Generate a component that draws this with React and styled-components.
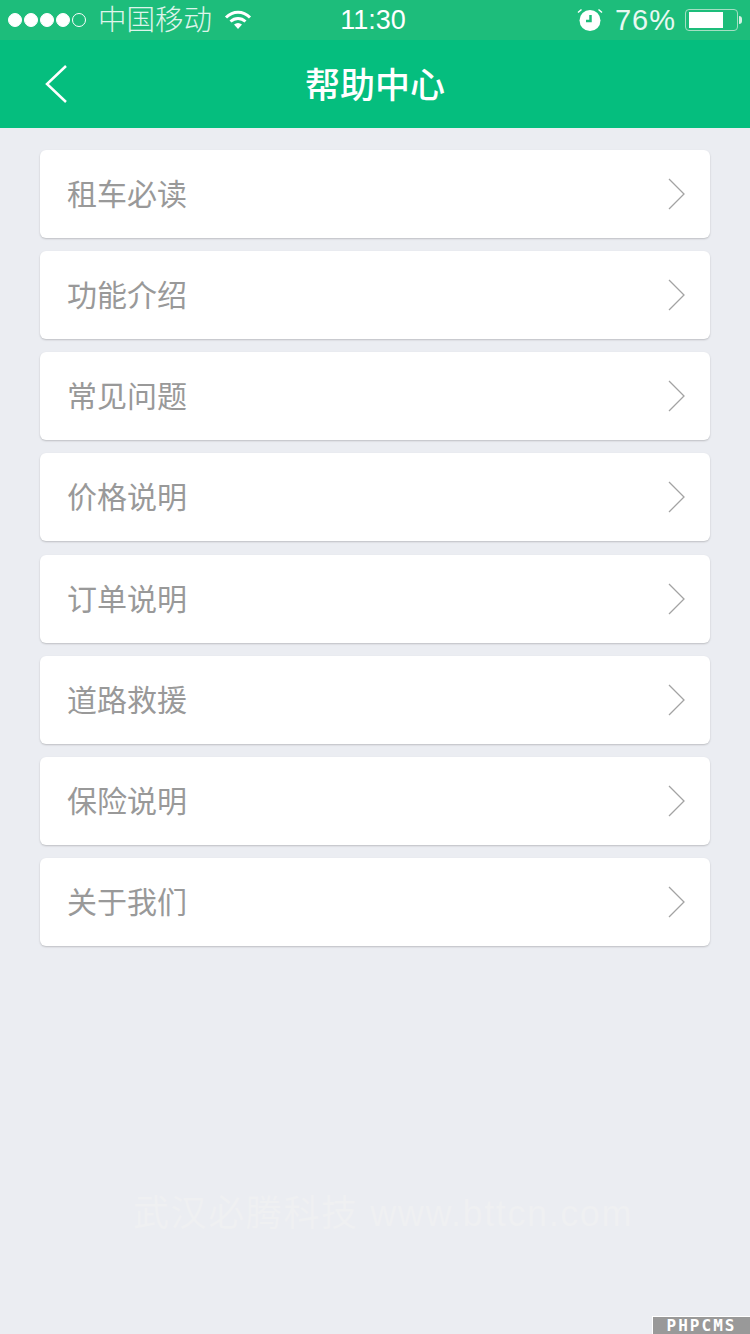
import React from 'react'
import styled, { createGlobalStyle } from 'styled-components'

const items = ['租车必读', '功能介绍', '常见问题', '价格说明', '订单说明', '道路救援', '保险说明', '关于我们']

function App() {
    return (
        <Page>
            <GlobalStyle />
            <StatusBar>
                <StatusLeft>
                    <Signal>
                        {[1, 2, 3, 4].map(i => <Dot key={i} />)}
                        <Dot $empty />
                    </Signal>
                    <Carrier>中国移动</Carrier>
                    <svg width="28" height="22" viewBox="0 0 28 22">
                        <path d="M2 8.500C9 1.500 19 1.500 26 8.500" fill="none" stroke="#fff" strokeWidth="3" />
                        <path d="M6.500 12.500C11 8.500 17 8.500 21.500 12.500" fill="none" stroke="#fff" strokeWidth="3" />
                        <path d="M10 15.500C12.500 13.500 15.500 13.500 18 15.500L14 20Z" fill="#fff" />
                    </svg>
                </StatusLeft>
                <Time>11:30</Time>
                <StatusRight>
                    <svg width="26" height="24" viewBox="0 0 26 24">
                        <circle cx="13" cy="12.500" r="10.500" fill="#fff" />
                        <path d="M13.500 7V13H9" fill="none" stroke="#1dbd7b" strokeWidth="2.500" />
                        <path d="M1 4.500L4.500 1.500M25 4.500L21.500 1.500" fill="none" stroke="#fff" strokeWidth="1.500" />
                    </svg>
                    <Percent>76%</Percent>
                    <Battery>
                        <BatteryFill />
                    </Battery>
                    <BatteryTip />
                </StatusRight>
            </StatusBar>
            <NavBar>
                <BackIcon width="26" height="40" viewBox="0 0 26 40">
                    <path d="M22 2L3 20L22 38" fill="none" stroke="#fff" strokeWidth="2.500" />
                </BackIcon>
                <Title>帮助中心</Title>
            </NavBar>
            <List>
                {items.map(item => (
                    <Row key={item}>
                        <RowLabel>{item}</RowLabel>
                        <svg width="17" height="32" viewBox="0 0 17 32">
                            <path d="M1 1L16 16L1 31" fill="none" stroke="#a3a3a3" strokeWidth="1.300" />
                        </svg>
                    </Row>
                ))}
            </List>
            <Watermark>武汉必腾科技 www.bttcn.com</Watermark>
            <Badge>PHPCMS</Badge>
        </Page>
    )
}

export default App

const GlobalStyle = createGlobalStyle`
    body {
        margin: 0;
        background: #ebedf2;
        font-family: "Liberation Sans", "Noto Sans CJK SC", sans-serif;
    }
`
const Page = styled.div`
    position: relative;
    width: 750px;
    height: 1334px;
    overflow: hidden;
    background-color: #ebedf2;
`
const StatusBar = styled.div`
    height: 40px;
    padding: 0 8px;
    display: grid;
    grid-template-columns: 1fr auto 1fr;
    align-items: center;
    background-color: #1dbd7b;
    color: #fff;
`
const StatusLeft = styled.div`
    display: flex;
    align-items: center;
`
const Signal = styled.div`
    display: flex;
    gap: 2px;
    margin-right: 12px;
`
const Dot = styled.span`
    width: 14px;
    height: 14px;
    box-sizing: border-box;
    border-radius: 50%;
    background-color: ${props => props.$empty ? 'transparent' : '#fff'};
    border: 1px solid #fff;
`
const Carrier = styled.span`
    font-size: 28.500px;
    font-weight: 300;
    line-height: 40px;
    margin-right: 12px;
    opacity: 0.85;
`
const Time = styled.span`
    margin-right: 4px;
    font-size: 27px;
    line-height: 40px;
`
const StatusRight = styled.div`
    display: flex;
    align-items: center;
    justify-content: flex-end;
`
const Percent = styled.span`
    font-size: 29px;
    line-height: 40px;
    letter-spacing: 1px;
    margin: 0 9px 0 12px;
    opacity: 0.9;
`
const Battery = styled.div`
    width: 53px;
    height: 22px;
    box-sizing: border-box;
    padding: 2px 3px;
    border: 1px solid #a5dfc3;
    border-radius: 4px;
`
const BatteryFill = styled.div`
    width: 76%;
    height: 100%;
    background-color: #fff;
`
const BatteryTip = styled.div`
    width: 3px;
    height: 8px;
    margin-left: 1px;
    border-radius: 0 3px 3px 0;
    background-color: #d5f2e4;
`
const NavBar = styled.div`
    position: relative;
    height: 88px;
    display: flex;
    align-items: center;
    justify-content: center;
    background-color: #05be7e;
`
const BackIcon = styled.svg`
    position: absolute;
    left: 44px;
    top: 24px;
`
const Title = styled.h1`
    margin: 0 0 2px;
    color: #fff;
    font-size: 35px;
    font-weight: 500;
    line-height: 86px;
    font-family: "Noto Sans CJK SC", sans-serif;
`
const List = styled.div`
    margin: 22px 40px 0;
    display: flex;
    flex-direction: column;
    gap: 13.150px;
`
const Row = styled.div`
    height: 88px;
    padding: 0 25px 0 27px;
    display: flex;
    align-items: center;
    justify-content: space-between;
    background-color: #fff;
    border-radius: 6px;
    box-shadow: 0 1px 2px rgba(0, 0, 0, 0.2);
`
const RowLabel = styled.span`
    margin-bottom: 4px;
    color: #999;
    font-size: 30px;
    line-height: 84px;
    font-family: "Noto Sans CJK SC", sans-serif;
`
const Watermark = styled.div`
    position: absolute;
    left: 133px;
    top: 1190px;
    color: #eff0f2;
    font-size: 36px;
    letter-spacing: 1.600px;
    line-height: 48px;
    white-space: nowrap;
`
const Badge = styled.div`
    position: absolute;
    right: 0;
    bottom: 0;
    width: 97px;
    height: 17px;
    background-color: #999;
    border-top: 1px solid #fff;
    border-left: 1px solid #fff;
    color: #fff;
    font-family: "DejaVu Sans Mono", monospace;
    font-size: 16px;
    font-weight: 700;
    line-height: 17px;
    letter-spacing: 2px;
    text-align: center;
`
